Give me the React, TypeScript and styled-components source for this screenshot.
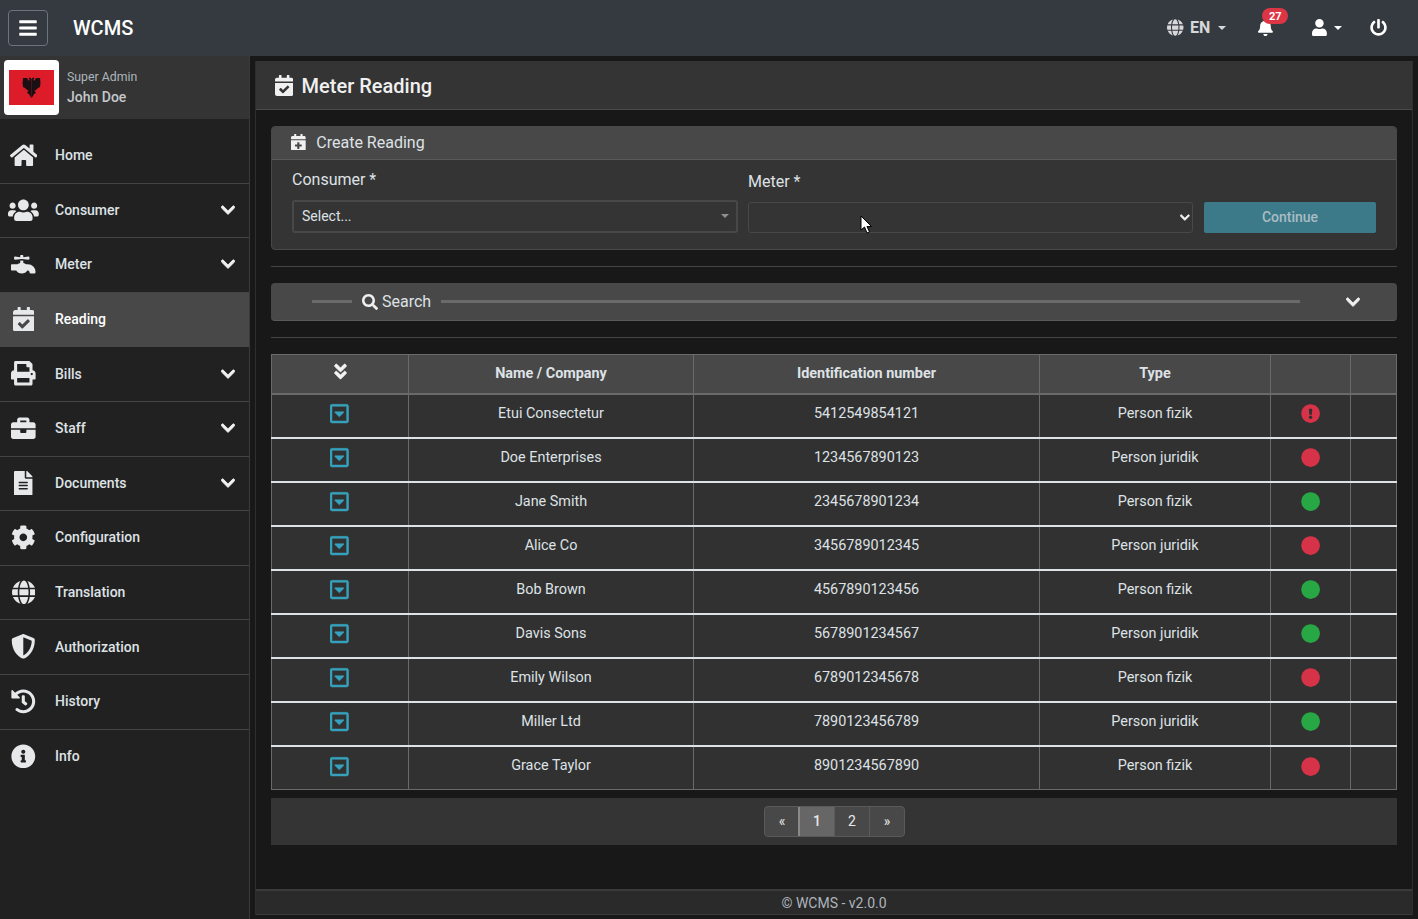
import React from 'react';
import styled, { createGlobalStyle } from 'styled-components';
import {
  FaBars,
  FaBell,
  FaBriefcase,
  FaCalendarCheck,
  FaCalendarPlus,
  FaChevronDown,
  FaCircle,
  FaCog,
  FaExclamationCircle,
  FaFaucet,
  FaFileAlt,
  FaGlobe,
  FaHistory,
  FaHome,
  FaInfoCircle,
  FaPowerOff,
  FaPrint,
  FaRegCaretSquareDown,
  FaSearch,
  FaShieldAlt,
  FaUser,
  FaUsers,
  FaAngleDoubleDown,
} from 'react-icons/fa';

const GlobalStyle = createGlobalStyle`
  * { box-sizing: border-box; }
  html, body { margin: 0; height: 100%; background: #181818; overflow: hidden; }
  body { font-family: Roboto, "Liberation Sans", sans-serif; color: #dee2e6; font-size: 14px; }
  svg { flex-shrink: 0; }
`;

const Page = styled.div`
  width: 1418px;
  height: 919px;
  display: grid;
  grid-template-rows: 56px 1fr;
  grid-template-columns: 250px 1fr;
`;

const Navbar = styled.header`
  grid-column: 1 / 3;
  display: flex;
  align-items: center;
  background: #343a40;
  padding: 0 31px 0 8px;
`;

const MenuToggle = styled.button`
  width: 40px;
  height: 36px;
  background: none;
  border: 1px solid #6c757d;
  border-radius: 4px;
  color: #fff;
  display: flex;
  align-items: center;
  justify-content: center;
  font-size: 20px;
  padding: 0;
`;

const Brand = styled.div`
  margin-left: 25px;
  font-size: 20px;
  font-weight: 500;
  color: #fff;
`;

const NavActions = styled.div`
  margin-left: auto;
  margin-bottom: 1px;
  display: flex;
  align-items: center;
  color: #fff;
  font-size: 17px;
`;

const Caret = styled.span`
  width: 0;
  height: 0;
  border-left: 4px solid transparent;
  border-right: 4px solid transparent;
  border-top: 4px solid currentColor;
`;

const LangItem = styled.div`
  display: flex;
  align-items: center;
  color: #d6d8da;
  font-size: 16px;
  font-weight: 700;
  gap: 6px;
  & > svg { font-size: 17px; width: 0.97em; }
  & > ${Caret} { margin-left: 2px; }
`;

const BellItem = styled.div`
  position: relative;
  display: flex;
  margin-left: 32px;
  & > svg { width: 0.875em; }
`;

const Badge = styled.span`
  position: absolute;
  top: -11px;
  left: 4px;
  width: 26px;
  height: 16px;
  border-radius: 8px;
  background: #dc3545;
  color: #fff;
  font-size: 11px;
  font-weight: 700;
  display: flex;
  align-items: center;
  justify-content: center;
`;

const UserItem = styled.div`
  display: flex;
  align-items: center;
  gap: 7px;
  margin-left: 39px;
  & > svg { width: 0.875em; }
`;

const PowerItem = styled.div`
  display: flex;
  margin-left: 28px;
`;

const Sidebar = styled.aside`
  background: #212121;
  border-right: 1px solid #3a3a3a;
  display: flex;
  flex-direction: column;
`;

const UserPanel = styled.div`
  height: 63px;
  background: #343434;
  display: flex;
  align-items: center;
  padding-left: 4px;
  flex-shrink: 0;
`;

const FlagTile = styled.div`
  width: 55px;
  height: 55px;
  margin-bottom: 1px;
  background: #fff;
  border-radius: 4px;
  display: flex;
  align-items: center;
  justify-content: center;
`;

const UserText = styled.div`
  margin-left: 8px;
  padding-bottom: 1px;
  display: flex;
  flex-direction: column;
  gap: 5px;
`;

const UserRole = styled.div`
  font-size: 12.3px;
  color: #adb5bd;
`;

const UserName = styled.div`
  font-size: 14px;
  font-weight: 500;
  color: #c4c8cc;
`;

const NavList = styled.nav`
  padding-top: 10px;
  display: flex;
  flex-direction: column;
`;

const NavRow = styled.div<{ $active?: boolean; $last?: boolean }>`
  height: 54.6px;
  display: flex;
  align-items: center;
  padding: 0 14px 1px 9px;
  font-size: 14px;
  font-weight: 500;
  color: ${(p) => (p.$active ? '#fff' : '#dee2e6')};
  background: ${(p) => (p.$active ? '#484848' : 'transparent')};
  border-bottom: 1px solid ${(p) => (p.$active || p.$last ? 'transparent' : '#454545')};
`;

const NavIcon = styled.span<{ $ratio: number }>`
  width: 29px;
  margin-right: 17px;
  display: flex;
  justify-content: center;
  font-size: 24.6px;
  color: #e6e8ea;
  & > svg { width: ${(p) => p.$ratio}em; }
`;

const NavChevron = styled.span`
  margin-left: auto;
  display: flex;
  font-size: 16px;
  color: #f0f0f0;
  & > svg { width: 0.875em; stroke: currentColor; stroke-width: 30; }
`;

const Main = styled.main`
  margin: 5px 5px 4px 5px;
  background: #181818;
  border-left: 1px solid #2e2e2e;
  border-right: 1px solid #2e2e2e;
  display: flex;
  flex-direction: column;
  min-height: 0;
`;

const TitleBar = styled.div`
  height: 49px;
  background: #343434;
  border-bottom: 1px solid #4a4a4a;
  display: flex;
  align-items: center;
  gap: 8.5px;
  padding: 1px 0 0 18.7px;
  color: #f0f0f0;
  font-size: 20px;
  font-weight: 500;
  flex-shrink: 0;
  & > svg { font-size: 21px; width: 0.875em; margin-top: -1px; }
`;

const Content = styled.div`
  flex: 1;
  padding: 16px 15px 0 15px;
  display: flex;
  flex-direction: column;
`;

const Card = styled.section`
  height: 124px;
  background: #343434;
  border: 1px solid #484848;
  border-radius: 4px;
  overflow: hidden;
`;

const CardHead = styled.div`
  height: 33px;
  background: #484848;
  border-bottom: 1px solid #5a5a5a;
  display: flex;
  align-items: center;
  gap: 10.6px;
  padding: 0 0 2px 19px;
  font-size: 16px;
  color: #dee2e6;
  & > svg { font-size: 16.8px; width: 0.875em; color: #f0f0f0; }
`;

const FormRow = styled.div`
  display: grid;
  grid-template-columns: 446px 445px 173px;
  column-gap: 10px;
  padding: 0 20px;
  & > button { margin-left: 1px; }
`;

const Field = styled.div`
  display: flex;
  flex-direction: column;
`;

const FieldLabel = styled.label<{ $top: number }>`
  font-size: 16px;
  line-height: 19px;
  margin-top: ${(p) => p.$top}px;
  height: 30px;
  color: #dee2e6;
`;

const SelectBox = styled.div<{ $strong?: boolean }>`
  height: ${(p) => (p.$strong ? '33px' : '31px')};
  border: ${(p) => (p.$strong ? '2px' : '1px')} solid #484848;
  border-radius: 3px;
  display: flex;
  align-items: center;
  justify-content: space-between;
  padding: ${(p) => (p.$strong ? '0 7px 1px 8px' : '0 2px 0 8px')};
  font-size: 14px;
  color: #dee2e6;
  & > svg { font-size: 11px; width: 0.875em; color: #f0f0f0; stroke: currentColor; stroke-width: 30; }
`;

const ReactCaret = styled(Caret)`
  color: #8f8f8f;
`;

const ContinueButton = styled.button`
  align-self: end;
  height: 31px;
  background: #3c7a8a;
  border: none;
  border-radius: 2px;
  color: #a9bcc2;
  font-family: inherit;
  font-size: 14px;
  font-weight: 500;
  padding: 0 0 2px;
`;

const Rule = styled.hr`
  width: 100%;
  margin: 16px 0;
  border: none;
  border-top: 1px solid #454545;
  flex-shrink: 0;
`;

const SearchBar = styled.div`
  height: 38px;
  background: #484848;
  border-bottom: 1px solid #5a5a5a;
  border-radius: 4px;
  display: flex;
  align-items: center;
  padding: 0 37px 0 41px;
  font-size: 16px;
  color: #dee2e6;
  flex-shrink: 0;
`;

const SearchLine = styled.span<{ $grow?: boolean }>`
  height: 3px;
  background: #6a6a6a;
  width: ${(p) => (p.$grow ? 'auto' : '40px')};
  flex: ${(p) => (p.$grow ? 1 : '0 0 auto')};
`;

const SearchLabel = styled.span`
  display: flex;
  align-items: center;
  gap: 4px;
  margin: 0 10px;
  & > svg { font-size: 16px; color: #f0f0f0; }
`;

const SearchChevron = styled.span`
  display: flex;
  margin-left: 46px;
  font-size: 16px;
  color: #f0f0f0;
  & > svg { width: 0.875em; stroke: currentColor; stroke-width: 30; }
`;

const DataTable = styled.table`
  width: 1126px;
  border-collapse: collapse;
  table-layout: fixed;
  font-size: 14.4px;
  border: 1px solid #6a6a6a;
  flex-shrink: 0;
`;

const HeadCell = styled.th`
  height: 39px;
  background: #484848;
  border: 1px solid #6a6a6a;
  border-bottom: 2px solid #6a6a6a;
  font-weight: 700;
  font-size: 14.4px;
  color: #dee2e6;
  padding: 0;
  text-align: center;
  & > svg { font-size: 19px; color: #f4f4f4; vertical-align: middle; margin-top: -6px; stroke: currentColor; stroke-width: 20; }
`;

const BodyRow = styled.tr<{ $last?: boolean }>`
  height: 44px;
  background: #313131;
  border-bottom: ${(p) => (p.$last ? '1px solid #6a6a6a' : '2px solid #dee2e6')};
`;

const BodyCell = styled.td`
  border-left: 1px solid #6a6a6a;
  border-right: 1px solid #6a6a6a;
  text-align: center;
  padding: 0 0 5px;
  color: #dee2e6;
`;

const IconCell = styled(BodyCell)`
  padding: 0 0 3px;
  line-height: 0;
  & > svg { vertical-align: middle; }
`;

const ExpandIcon = styled(FaRegCaretSquareDown)`
  color: #36a2bd;
  font-size: 21.3px;
  width: 0.875em;
  margin-left: -1px;
  stroke: currentColor;
  stroke-width: 12;
`;

const StatusDot = styled(FaCircle)<{ $ok: boolean }>`
  color: ${(p) => (p.$ok ? '#28a745' : '#d63348')};
  font-size: 19.2px;
`;

const ErrorDot = styled(FaExclamationCircle)`
  color: #d63348;
  font-size: 19.2px;
`;

const PagerBar = styled.div`
  height: 47px;
  margin-top: 8px;
  background: #343434;
  display: flex;
  align-items: center;
  justify-content: center;
  flex-shrink: 0;
`;

const PagerGroup = styled.div`
  display: flex;
  height: 31px;
  margin-left: 1px;
  border: 1px solid #5a5a5a;
  border-radius: 4px;
  overflow: hidden;
  background: #484848;
`;

const PagerButton = styled.div<{ $active?: boolean }>`
  width: 35px;
  padding-bottom: 1px;
  display: flex;
  align-items: center;
  justify-content: center;
  font-size: 14px;
  font-weight: ${(p) => (p.$active ? 500 : 400)};
  color: #e8e8e8;
  background: ${(p) => (p.$active ? '#666666' : 'transparent')};
  border-left: 1px solid ${(p) => (p.$active ? '#8a8a8a' : '#5a5a5a')};
  outline: ${(p) => (p.$active ? '1px solid #8a8a8a' : 'none')};
  &:first-child { border-left: none; width: 34px; }
`;

const Footer = styled.footer`
  margin-top: auto;
  height: 26px;
  background: #2a2a2a;
  border-top: 2px solid #3a3a3a;
  border-bottom: 1px solid #3a3a3a;
  display: flex;
  align-items: center;
  justify-content: center;
  padding-top: 1px;
  font-size: 14px;
  color: #adb5bd;
  flex-shrink: 0;
`;

const MouseCursor = styled.svg`
  position: absolute;
  left: 860px;
  top: 215px;
`;

const navItems = [
  { label: 'Home', icon: <FaHome />, ratio: 1.125 },
  { label: 'Consumer', icon: <FaUsers />, ratio: 1.25, sub: true },
  { label: 'Meter', icon: <FaFaucet />, ratio: 1, sub: true },
  { label: 'Reading', icon: <FaCalendarCheck />, ratio: 0.875, active: true },
  { label: 'Bills', icon: <FaPrint />, ratio: 1, sub: true },
  { label: 'Staff', icon: <FaBriefcase />, ratio: 1, sub: true },
  { label: 'Documents', icon: <FaFileAlt />, ratio: 0.75, sub: true },
  { label: 'Configuration', icon: <FaCog />, ratio: 1 },
  { label: 'Translation', icon: <FaGlobe />, ratio: 0.97 },
  { label: 'Authorization', icon: <FaShieldAlt />, ratio: 1 },
  { label: 'History', icon: <FaHistory />, ratio: 1 },
  { label: 'Info', icon: <FaInfoCircle />, ratio: 1, last: true },
];

const consumers = [
  { name: 'Etui Consectetur', id: '5412549854121', type: 'Person fizik', status: 'error' },
  { name: 'Doe Enterprises', id: '1234567890123', type: 'Person juridik', status: 'bad' },
  { name: 'Jane Smith', id: '2345678901234', type: 'Person fizik', status: 'ok' },
  { name: 'Alice Co', id: '3456789012345', type: 'Person juridik', status: 'bad' },
  { name: 'Bob Brown', id: '4567890123456', type: 'Person fizik', status: 'ok' },
  { name: 'Davis Sons', id: '5678901234567', type: 'Person juridik', status: 'ok' },
  { name: 'Emily Wilson', id: '6789012345678', type: 'Person fizik', status: 'bad' },
  { name: 'Miller Ltd', id: '7890123456789', type: 'Person juridik', status: 'ok' },
  { name: 'Grace Taylor', id: '8901234567890', type: 'Person fizik', status: 'bad' },
];

const eagleHalf =
  'M22.5 9L21 7.500L19.500 8L20.500 9.500L20 11L18 8L14 8L13.500 13L14 17L16 18L18 20L19.500 20.500L18 23L20 24L21 26L22.500 28Z';

function AlbaniaFlag() {
  return (
    <svg width="45" height="35" viewBox="0 0 45 35">
      <rect width="45" height="35" fill="#dd1c2a" />
      <path d={eagleHalf} fill="#1a1014" />
      <path d={eagleHalf} fill="#1a1014" transform="translate(45 0) scale(-1 1)" />
    </svg>
  );
}

export default function App() {
  return (
    <Page>
      <GlobalStyle />
      <Navbar>
        <MenuToggle>
          <FaBars />
        </MenuToggle>
        <Brand>WCMS</Brand>
        <NavActions>
          <LangItem>
            <FaGlobe />
            EN
            <Caret />
          </LangItem>
          <BellItem>
            <FaBell />
            <Badge>27</Badge>
          </BellItem>
          <UserItem>
            <FaUser />
            <Caret />
          </UserItem>
          <PowerItem>
            <FaPowerOff />
          </PowerItem>
        </NavActions>
      </Navbar>

      <Sidebar>
        <UserPanel>
          <FlagTile>
            <AlbaniaFlag />
          </FlagTile>
          <UserText>
            <UserRole>Super Admin</UserRole>
            <UserName>John Doe</UserName>
          </UserText>
        </UserPanel>
        <NavList>
          {navItems.map((item) => (
            <NavRow key={item.label} $active={item.active} $last={item.last}>
              <NavIcon $ratio={item.ratio}>{item.icon}</NavIcon>
              {item.label}
              {item.sub && (
                <NavChevron>
                  <FaChevronDown />
                </NavChevron>
              )}
            </NavRow>
          ))}
        </NavList>
      </Sidebar>

      <Main>
        <TitleBar>
          <FaCalendarCheck />
          Meter Reading
        </TitleBar>
        <Content>
          <Card>
            <CardHead>
              <FaCalendarPlus />
              Create Reading
            </CardHead>
            <FormRow>
              <Field>
                <FieldLabel $top={10}>Consumer *</FieldLabel>
                <SelectBox $strong>
                  Select...
                  <ReactCaret />
                </SelectBox>
              </Field>
              <Field>
                <FieldLabel $top={12}>Meter *</FieldLabel>
                <SelectBox>
                  <span />
                  <FaChevronDown />
                </SelectBox>
              </Field>
              <ContinueButton>Continue</ContinueButton>
            </FormRow>
          </Card>
          <Rule />
          <SearchBar>
            <SearchLine />
            <SearchLabel>
              <FaSearch />
              Search
            </SearchLabel>
            <SearchLine $grow />
            <SearchChevron>
              <FaChevronDown />
            </SearchChevron>
          </SearchBar>
          <Rule />
          <DataTable>
            <colgroup>
              <col style={{ width: 137 }} />
              <col style={{ width: 285 }} />
              <col style={{ width: 346 }} />
              <col style={{ width: 231 }} />
              <col style={{ width: 80 }} />
              <col />
            </colgroup>
            <thead>
              <tr>
                <HeadCell>
                  <FaAngleDoubleDown />
                </HeadCell>
                <HeadCell>Name / Company</HeadCell>
                <HeadCell>Identification number</HeadCell>
                <HeadCell>Type</HeadCell>
                <HeadCell />
                <HeadCell />
              </tr>
            </thead>
            <tbody>
              {consumers.map((c, i) => (
                <BodyRow key={c.id} $last={i === consumers.length - 1}>
                  <IconCell>
                    <ExpandIcon />
                  </IconCell>
                  <BodyCell>{c.name}</BodyCell>
                  <BodyCell>{c.id}</BodyCell>
                  <BodyCell>{c.type}</BodyCell>
                  <IconCell>
                    {c.status === 'error' ? <ErrorDot /> : <StatusDot $ok={c.status === 'ok'} />}
                  </IconCell>
                  <BodyCell />
                </BodyRow>
              ))}
            </tbody>
          </DataTable>
          <PagerBar>
            <PagerGroup>
              <PagerButton>«</PagerButton>
              <PagerButton $active>1</PagerButton>
              <PagerButton>2</PagerButton>
              <PagerButton>»</PagerButton>
            </PagerGroup>
          </PagerBar>
        </Content>
        <Footer>© WCMS - v2.0.0</Footer>
      </Main>

      <MouseCursor width="13" height="19" viewBox="0 0 13 19">
        <path d="M1 1v14l3.500-3 2.500 6 2.500-1-2.500-5.500H11.500z" fill="#fff" stroke="#000" strokeWidth="1" />
      </MouseCursor>
    </Page>
  );
}
